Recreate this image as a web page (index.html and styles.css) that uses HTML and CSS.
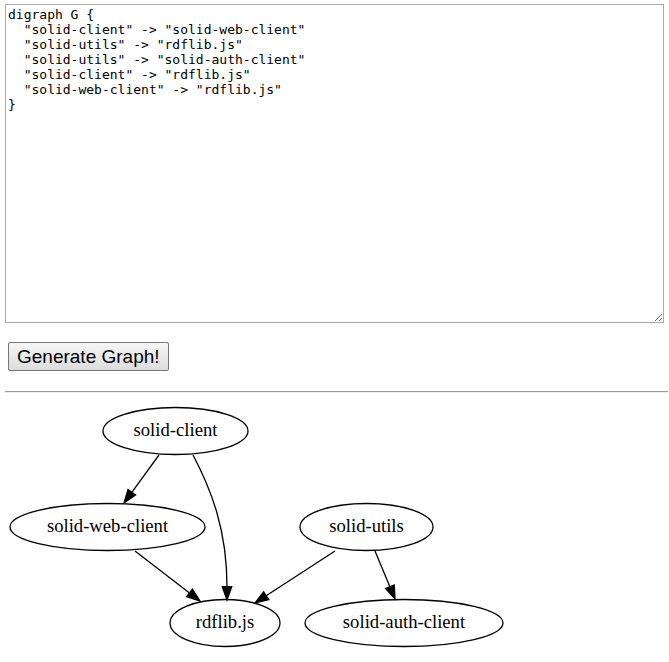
FILE: index.html
```html
<!DOCTYPE html>
<html lang="en">
<head>
    <meta charset="UTF-8">
    <title>Graph</title>
    <link rel="stylesheet" href="styles.css">
</head>
<body>
    <textarea id="dot-source" class="dot-input" spellcheck="false">digraph G {
  "solid-client" -> "solid-web-client"
  "solid-utils" -> "rdflib.js"
  "solid-utils" -> "solid-auth-client"
  "solid-client" -> "rdflib.js"
  "solid-web-client" -> "rdflib.js"
}</textarea>

    <button type="button" class="generate-button">Generate Graph!</button>

    <hr class="divider">

    <div class="graph-output">
        <svg width="510" height="255" viewBox="0 0 510 255">
            <defs>
                <marker id="arrow" markerUnits="userSpaceOnUse" markerWidth="15" markerHeight="11" refX="0" refY="4.7" orient="auto" overflow="visible">
                    <path d="M0,0 L13.3,4.7 L0,9.4 z" fill="#000" stroke="#000" stroke-width="1.3"/>
                </marker>
            </defs>
            <g class="edges">
                <!-- solid-client -> solid-web-client -->
                <path d="M154,54 L126.8,91.3" marker-end="url(#arrow)"/>
                <!-- solid-client -> rdflib.js -->
                <path d="M188,54 C207,90 222,130 222,185.7" marker-end="url(#arrow)"/>
                <!-- solid-web-client -> rdflib.js -->
                <path d="M130,150 L184.5,191.9" marker-end="url(#arrow)"/>
                <!-- solid-utils -> rdflib.js -->
                <path d="M330,150 L261.2,194.7" marker-end="url(#arrow)"/>
                <!-- solid-utils -> solid-auth-client -->
                <path d="M370,150 L384.9,185.7" marker-end="url(#arrow)"/>
            </g>
            <g class="nodes">
                <ellipse cx="170.5" cy="30" rx="72.5" ry="23.5"/>
                <text x="170.5" y="35">solid-client</text>

                <ellipse cx="102.5" cy="126" rx="97.5" ry="23.5"/>
                <text x="102.5" y="131">solid-web-client</text>

                <ellipse cx="361.5" cy="126" rx="66.5" ry="23.5"/>
                <text x="361.5" y="131">solid-utils</text>

                <ellipse cx="220" cy="222" rx="55" ry="23.5"/>
                <text x="220" y="227">rdflib.js</text>

                <ellipse cx="399" cy="222" rx="99" ry="23.5"/>
                <text x="399" y="227">solid-auth-client</text>
            </g>
        </svg>
    </div>
</body>
</html>
```

FILE: styles.css
```css
body {
    margin: 0;
    padding: 4px 1px 0 5px;
    font-family: 'Liberation Serif', 'Times New Roman', serif;
    background-color: #ffffff;
}

.dot-input {
    display: block;
    box-sizing: border-box;
    width: 659px;
    height: 319px;
    margin: 0;
    padding: 2px;
    border: 1px solid #a9a9a9;
    font-family: 'DejaVu Sans Mono', monospace;
    font-size: 13px;
    line-height: 15px;
    color: #000;
    resize: both;
}

.generate-button {
    display: block;
    margin: 19px 0 0 3px;
    padding: 3px 8px;
    border: 1px solid #767676;
    border-radius: 2px;
    background: linear-gradient(#f6f6f6, #dddddd);
    font-family: 'Liberation Sans', Arial, sans-serif;
    font-size: 19px;
    line-height: 21px;
    color: #000;
}

.divider {
    margin: 20px 0 8px 0;
    height: 0;
    border: none;
    border-top: 1px solid #9a9a9a;
    border-bottom: 1px solid #eeeeee;
}

.graph-output svg {
    display: block;
}

.edges path {
    fill: none;
    stroke: #000;
    stroke-width: 1.3;
}

.nodes ellipse {
    fill: none;
    stroke: #000;
    stroke-width: 1.3;
}

.nodes text {
    font-family: 'Liberation Serif', 'Times New Roman', serif;
    font-size: 18.67px;
    text-anchor: middle;
    fill: #000;
}
```
